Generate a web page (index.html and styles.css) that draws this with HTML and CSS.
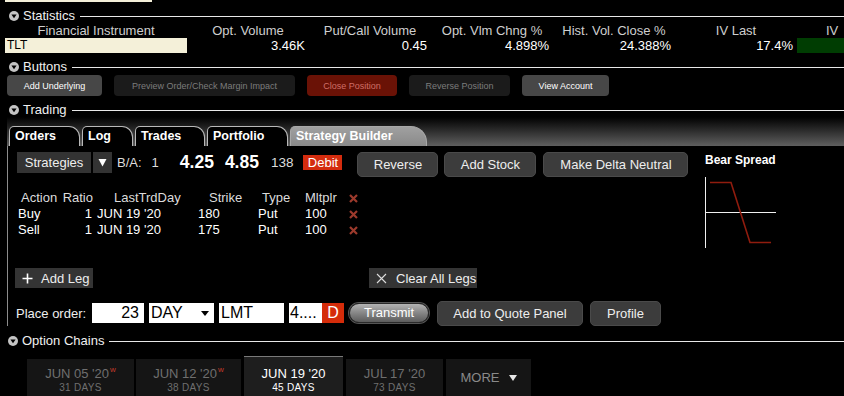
FILE: index.html
```html
<!DOCTYPE html>
<html>
<head>
<meta charset="utf-8">
<link rel="stylesheet" href="styles.css">
</head>
<body>
<div class="page">
  <div class="strip"></div>

  <div class="sec sec-stats">
    <svg class="tri" viewBox="0 0 10 10"><circle cx="5" cy="5" r="5" fill="#c4c4c4"/><polygon points="2.4,3.6 7.6,3.6 5,7.2" fill="#000"/></svg>
    <span class="sec-title">Statistics</span><span class="sec-line"></span>
  </div>
  <div class="stats">
    <div class="stats-grid">
      <div class="sh">Financial Instrument</div>
      <div class="sh">Opt. Volume</div>
      <div class="sh">Put/Call Volume</div>
      <div class="sh">Opt. Vlm Chng %</div>
      <div class="sh">Hist. Vol. Close %</div>
      <div class="sh">IV Last</div>
      <div class="sh sh-iv">IV</div>
      <div class="sv sv-tlt">TLT</div>
      <div class="sv">3.46K</div>
      <div class="sv">0.45</div>
      <div class="sv">4.898%</div>
      <div class="sv">24.388%</div>
      <div class="sv">17.4%</div>
      <div class="sv sv-green"></div>
    </div>
  </div>

  <div class="sec sec-gap">
    <svg class="tri" viewBox="0 0 10 10"><circle cx="5" cy="5" r="5" fill="#c4c4c4"/><polygon points="2.4,3.6 7.6,3.6 5,7.2" fill="#000"/></svg>
    <span class="sec-title">Buttons</span><span class="sec-line"></span>
  </div>
  <div class="btnrow">
    <div class="sbtn sbtn-on w95">Add Underlying</div>
    <div class="sbtn sbtn-off w181">Preview Order/Check Margin Impact</div>
    <div class="sbtn sbtn-red w90">Close Position</div>
    <div class="sbtn sbtn-off w101">Reverse Position</div>
    <div class="sbtn sbtn-on w87">View Account</div>
  </div>

  <div class="sec sec-gap">
    <svg class="tri" viewBox="0 0 10 10"><circle cx="5" cy="5" r="5" fill="#c4c4c4"/><polygon points="2.4,3.6 7.6,3.6 5,7.2" fill="#000"/></svg>
    <span class="sec-title">Trading</span><span class="sec-line"></span>
  </div>
  <div class="tabstrip">
    <div class="tab w71">Orders</div>
    <div class="tab w51">Log</div>
    <div class="tab w70">Trades</div>
    <div class="tab w81">Portfolio</div>
    <div class="tab tab-active w137">Strategy Builder</div>
  </div>
  <div class="pbody">
    <div class="lcol">
      <div class="row1">
        <div class="lgroup">
          <div class="strat">Strategies</div>
          <div class="caret"><svg width="9" height="9" viewBox="0 0 9 9"><polygon points="0.5,1 8.5,1 4.5,8.5" fill="#fff"/></svg></div>
          <span class="ba">B/A:</span>
          <span class="ba-n">1</span>
          <span class="px px1">4.25</span>
          <span class="px px2">4.85</span>
          <span class="qty">138</span>
          <span class="debit">Debit</span>
        </div>
        <div class="bigbtn w81 first">Reverse</div>
        <div class="bigbtn w92 g6">Add Stock</div>
        <div class="bigbtn w145 g7">Make Delta Neutral</div>
      </div>

      <div class="legs">
        <div class="lh h1">Action</div>
        <div class="lh h2">Ratio</div>
        <div class="lh h3">LastTrdDay</div>
        <div class="lh h4">Strike</div>
        <div class="lh h5">Type</div>
        <div class="lh h6">Mltplr</div>
        <div class="lh h7"><svg class="xmark" viewBox="0 0 9 9"><path d="M1 1L8 8M8 1L1 8" stroke="#9c3a2c" stroke-width="2.2"/></svg></div>

        <div class="ld d1">Buy</div>
        <div class="ld d2">1</div>
        <div class="ld d3">JUN 19 '20</div>
        <div class="ld d4">180</div>
        <div class="ld d5">Put</div>
        <div class="ld d6">100</div>
        <div class="ld d7"><svg class="xmark" viewBox="0 0 9 9"><path d="M1 1L8 8M8 1L1 8" stroke="#9c3a2c" stroke-width="2.2"/></svg></div>

        <div class="ld d1">Sell</div>
        <div class="ld d2">1</div>
        <div class="ld d3">JUN 19 '20</div>
        <div class="ld d4">175</div>
        <div class="ld d5">Put</div>
        <div class="ld d6">100</div>
        <div class="ld d7"><svg class="xmark" viewBox="0 0 9 9"><path d="M1 1L8 8M8 1L1 8" stroke="#9c3a2c" stroke-width="2.2"/></svg></div>
      </div>

      <div class="legrow">
        <div class="legbtn addleg"><svg class="ico" viewBox="0 0 11 11"><path d="M5.5 0.5V10.5M0.5 5.5H10.5" stroke="#fff" stroke-width="1.6"/></svg><span>Add Leg</span></div>
        <div class="legbtn clearleg"><svg class="ico" viewBox="0 0 11 11"><path d="M1 1L10 10M10 1L1 10" stroke="#ddd" stroke-width="1.1"/></svg><span>Clear All Legs</span></div>
      </div>

      <div class="placerow">
        <span class="plabel">Place order:</span>
        <div class="inp inp-qty">23</div>
        <div class="inp inp-sel">DAY<svg class="selcaret" viewBox="0 0 8 5"><polygon points="0,0 8,0 4,5" fill="#000"/></svg></div>
        <div class="inp inp-lmt">LMT</div>
        <div class="pricebox"><span class="inp-px">4....</span><span class="dbox">D</span></div>
        <div class="transmit">Transmit</div>
        <div class="bigbtn w146 g8">Add to Quote Panel</div>
        <div class="bigbtn w71 g7">Profile</div>
      </div>
    </div>
    <div class="rcol">
      <div class="bs-title">Bear Spread</div>
      <svg class="chart" width="76" height="72" viewBox="0 0 76 72">
        <line x1="0.5" y1="0" x2="0.5" y2="71" stroke="#f0f0f0" stroke-width="1"/>
        <line x1="0" y1="35.5" x2="71" y2="35.5" stroke="#f0f0f0" stroke-width="1"/>
        <polyline points="5,5.5 26,5.5 45,65.5 66,65.5" fill="none" stroke="#901c0e" stroke-width="1.6"/>
      </svg>
    </div>
  </div>

  <div class="sec sec-oc">
    <svg class="tri" viewBox="0 0 10 10"><circle cx="5" cy="5" r="5" fill="#c4c4c4"/><polygon points="2.4,3.6 7.6,3.6 5,7.2" fill="#000"/></svg>
    <span class="sec-title">Option Chains</span><span class="sec-line"></span>
  </div>
  <div class="exps">
    <div class="exp w107"><div class="ed">JUN 05 '20<sup>w</sup></div><div class="ey">31 DAYS</div></div>
    <div class="exp w105 g2"><div class="ed">JUN 12 '20<sup>w</sup></div><div class="ey">38 DAYS</div></div>
    <div class="exp exp-active w99 g3"><div class="ed">JUN 19 '20</div><div class="ey">45 DAYS</div></div>
    <div class="exp w97 g3"><div class="ed">JUL 17 '20</div><div class="ey">73 DAYS</div></div>
    <div class="exp exp-more w85 g3"><span>MORE</span><svg class="morecaret" viewBox="0 0 8 6"><polygon points="0,0 8,0 4,6" fill="#e6e6e6"/></svg></div>
  </div>
</div>
</body>
</html>
```

FILE: styles.css
```css
* { box-sizing: border-box; }
html, body {
  margin: 0;
  padding: 0;
  background: #000;
  overflow: hidden;
}
body {
  font-family: "Liberation Sans", Arial, sans-serif;
  color: #fff;
  width: 844px;
  height: 396px;
}
.page { width: 844px; height: 396px; overflow: hidden; }

.strip {
  margin-left: 5px;
  width: 147px;
  height: 2px;
  background: #f3efd9;
}

/* section headers */
.sec {
  display: flex;
  align-items: center;
  height: 14px;
  padding-left: 9px;
}
.sec-stats { margin-top: 7px; }
.sec-gap { margin-top: 7px; }
.sec-oc { margin-top: 8px; padding-left: 8px; }
.tri { width: 10px; height: 10px; flex: none; }
.sec-title {
  margin-left: 4px;
  font-size: 13px;
  line-height: 14px;
  color: #f0f0f0;
  white-space: nowrap;
}
.sec-line {
  flex: 1;
  height: 1px;
  background: #e8e8e8;
  margin-left: 5px;
}

/* statistics */
.stats {
  margin-left: 5px;
  overflow: hidden;
  width: 839px;
}
.stats-grid {
  display: grid;
  grid-template-columns: 182px repeat(6, 122px);
  grid-auto-rows: 15px;
  width: 914px;
}
.sh {
  font-size: 13px;
  line-height: 15px;
  color: #cfcfcf;
  text-align: center;
  white-space: nowrap;
}
.sh-iv { text-align: left; padding-left: 29px; }
.sv {
  font-size: 13px;
  line-height: 15px;
  color: #fff;
  text-align: right;
  padding-right: 4px;
  white-space: nowrap;
}
.sv-tlt {
  background: #f4f0d9;
  color: #000;
  text-align: left;
  padding-left: 2px;
  font-size: 12px;
}
.sv-green { background: #003d02; }

/* buttons row */
.btnrow {
  display: flex;
  gap: 12px;
  margin: 1px 0 0 7px;
  height: 21px;
}
.sbtn {
  height: 21px;
  border-radius: 4px;
  font-size: 9px;
  display: flex;
  align-items: center;
  justify-content: center;
  white-space: nowrap;
}
.sbtn-on { background: #474747; color: #fff; }
.sbtn-off { background: #1b1b1b; color: #7c7c7c; }
.sbtn-red { background: #6a1206; color: #cf6e66; }

.w51 { width: 51px; } .w70 { width: 70px; } .w71 { width: 71px; } .w81 { width: 81px; }
.w85 { width: 85px; } .w87 { width: 87px; } .w90 { width: 90px; } .w92 { width: 92px; }
.w95 { width: 95px; } .w97 { width: 97px; } .w99 { width: 99px; } .w101 { width: 101px; }
.w105 { width: 105px; } .w107 { width: 107px; } .w137 { width: 137px; } .w145 { width: 145px; }
.w146 { width: 146px; } .w181 { width: 181px; }

/* trading tabs */
.tabstrip {
  margin-left: 7px;
  height: 29px;
  background: linear-gradient(#000 0%, #1c1c1c 30%, #5f5f5f 100%);
  display: flex;
  align-items: flex-end;
  padding-left: 2px;
  gap: 2px;
}
.tab {
  height: 20px;
  border: 1px solid #b8b8b8;
  border-bottom: none;
  border-radius: 5px 11px 0 0;
  background: #000;
  color: #fff;
  font-weight: bold;
  font-size: 12.5px;
  line-height: 19px;
  padding-left: 5px;
  white-space: nowrap;
}
.tab-active {
  background: linear-gradient(#a0a0a0, #8a8a8a);
  border-color: #a8a8a8;
  border-radius: 5px 16px 0 0;
}

/* panel body */
.pbody {
  margin-left: 7px;
  border-left: 1px solid #8c8c8c;
  padding-left: 8px;
  height: 180px;
  display: flex;
}
.lcol { width: 689px; flex: none; }
.rcol { flex: 1; }

.row1 {
  display: flex;
  align-items: flex-start;
  margin-top: 6px;
  height: 25px;
}
.lgroup {
  display: flex;
  align-items: center;
  height: 21px;
  font-size: 13px;
}
.strat {
  margin-left: 1px;
  width: 74px;
  height: 21px;
  background: #333;
  color: #eee;
  font-size: 13px;
  line-height: 21px;
  text-align: center;
}
.caret {
  margin-left: 2px;
  width: 19px;
  height: 21px;
  background: #333;
  display: flex;
  align-items: center;
  justify-content: center;
}
.ba { margin-left: 5px; color: #ddd; }
.ba-n { margin-left: 10px; color: #ddd; }
.px { font-weight: bold; font-size: 17.5px; color: #fff; }
.px1 { margin-left: 21px; }
.px2 { margin-left: 11px; }
.qty { margin-left: 12px; color: #ddd; font-size: 13.5px; }
.debit {
  margin-left: 10px;
  width: 39px;
  height: 15px;
  background: #d42c0e;
  color: #fff;
  font-size: 13px;
  line-height: 15px;
  text-align: center;
}
.bigbtn {
  height: 25px;
  border-radius: 5px;
  background: #3c3c3c;
  border: 1px solid #4a4a4a;
  color: #eee;
  font-size: 13px;
  display: flex;
  align-items: center;
  justify-content: center;
  white-space: nowrap;
  flex: none;
}
.first { margin-left: 15px; }
.g6 { margin-left: 6px; }
.g7 { margin-left: 7px; }
.g8 { margin-left: 8px; }

/* legs table */
.legs {
  margin-top: 13px;
  display: grid;
  grid-template-columns: 44px 35px 95px 65px 45px 45px 17px;
  grid-auto-rows: 16px;
  font-size: 13px;
  line-height: 16px;
  white-space: nowrap;
}
.lh { color: #dcdcdc; }
.ld { color: #fff; }
.h1 { padding-left: 5px; }
.h2 { text-align: right; padding-right: 2px; }
.h3 { padding-left: 19px; }
.h4 { padding-left: 19px; }
.h5 { padding-left: 7px; }
.h6 { padding-left: 5px; }
.h7, .d7 { padding-left: 4px; display: flex; align-items: center; }
.d1 { padding-left: 2px; }
.d2 { text-align: right; padding-right: 3px; }
.d3 { padding-left: 2px; }
.d4 { padding-left: 8px; }
.d5 { padding-left: 3px; }
.d6 { padding-left: 5px; }
.xmark { width: 9px; height: 9px; }

.legrow {
  margin-top: 30px;
  display: flex;
  height: 20px;
}
.legbtn {
  height: 20px;
  background: #343434;
  color: #eee;
  font-size: 13px;
  display: flex;
  align-items: center;
  white-space: nowrap;
}
.ico { width: 11px; height: 11px; flex: none; }
.addleg { margin-left: -1px; width: 78px; padding-left: 7px; }
.addleg span { margin-left: 8px; }
.clearleg { margin-left: 276px; width: 108px; padding-left: 7px; }
.clearleg span { margin-left: 9px; }

.placerow {
  margin-top: 12px;
  height: 26px;
  display: flex;
  align-items: center;
}
.plabel { font-size: 13px; color: #eee; width: 76px; flex: none; }
.inp {
  height: 20px;
  background: #fff;
  color: #000;
  font-size: 16px;
  line-height: 20px;
  flex: none;
}
.inp-qty { width: 52px; text-align: right; padding-right: 5px; }
.inp-sel {
  margin-left: 5px;
  width: 65px;
  padding-left: 2px;
  display: flex;
  align-items: center;
  justify-content: space-between;
  padding-right: 5px;
}
.selcaret { width: 8px; height: 5px; }
.inp-lmt { margin-left: 5px; width: 65px; padding-left: 2px; }
.pricebox {
  margin-left: 5px;
  display: flex;
  height: 20px;
  flex: none;
}
.inp-px {
  width: 33px;
  background: #fff;
  color: #000;
  font-size: 16px;
  line-height: 20px;
  padding-left: 1px;
  overflow: hidden;
}
.dbox {
  width: 22px;
  background: #d52c0a;
  color: #fff;
  font-size: 16px;
  line-height: 20px;
  text-align: center;
}
.transmit {
  margin-left: 5px;
  width: 80px;
  height: 20px;
  border-radius: 10px;
  background: linear-gradient(#b4b4b4 0%, #8a8a8a 45%, #5c5c5c 100%);
  border: 1px solid #2a2a2a;
  box-shadow: 0 0 0 1px #555;
  color: #fff;
  font-size: 13px;
  line-height: 18px;
  text-align: center;
  flex: none;
}

/* chart */
.bs-title {
  margin-top: 6px;
  font-size: 12px;
  font-weight: bold;
  line-height: 16px;
  color: #fff;
  white-space: nowrap;
}
.chart { display: block; margin-top: 9px; }

/* expiries */
.exps {
  margin-top: 8px;
  margin-left: 27px;
  display: flex;
  align-items: flex-end;
  height: 40px;
}
.exp {
  height: 37px;
  background: #151515;
  color: #6f6f6f;
  text-align: center;
  padding-top: 7px;
  flex: none;
}
.g2 { margin-left: 2px; }
.g3 { margin-left: 3px; }
.ed { font-size: 13px; line-height: 15px; white-space: nowrap; }
.ed sup {
  color: #c43a2a;
  font-size: 8px;
  vertical-align: top;
  line-height: 8px;
  margin-left: 1px;
}
.ey { font-size: 10px; line-height: 13px; letter-spacing: 0.3px; }
.exp-active {
  height: 40px;
  background: #1e1e1e;
  border-top: 1px solid #7a7a7a;
  color: #fff;
  padding-top: 9px;
}
.exp-more {
  padding-top: 0;
  display: flex;
  align-items: center;
  justify-content: center;
  font-size: 13px;
  color: #8a8a8a;
}
.morecaret { width: 8px; height: 6px; margin-left: 9px; }
```
